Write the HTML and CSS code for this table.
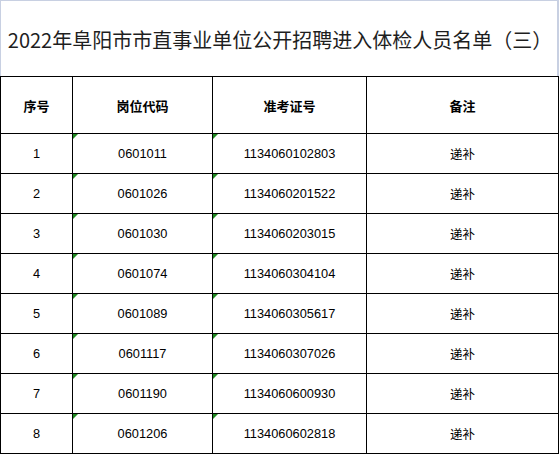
FILE: index.html
```html
<!DOCTYPE html>
<html lang="zh-CN">
<head>
<meta charset="utf-8">
<title>2022年阜阳市市直事业单位公开招聘进入体检人员名单（三）</title>
<link rel="stylesheet" href="styles.css">
</head>
<body>
<div class="sheet">
  <div class="title">2022年阜阳市市直事业单位公开招聘进入体检人员名单（三）</div>
  <table class="list">
    <colgroup>
      <col class="c1"><col class="c2"><col class="c3"><col class="c4">
    </colgroup>
    <thead>
      <tr class="head"><th>序号</th><th>岗位代码</th><th>准考证号</th><th>备注</th></tr>
    </thead>
    <tbody>
      <tr><td>1</td><td class="flag">0601011</td><td class="flag">1134060102803</td><td class="cn">递补</td></tr>
      <tr><td>2</td><td class="flag">0601026</td><td class="flag">1134060201522</td><td class="cn">递补</td></tr>
      <tr><td>3</td><td class="flag">0601030</td><td class="flag">1134060203015</td><td class="cn">递补</td></tr>
      <tr><td>4</td><td class="flag">0601074</td><td class="flag">1134060304104</td><td class="cn">递补</td></tr>
      <tr><td>5</td><td class="flag">0601089</td><td class="flag">1134060305617</td><td class="cn">递补</td></tr>
      <tr><td>6</td><td class="flag">0601117</td><td class="flag">1134060307026</td><td class="cn">递补</td></tr>
      <tr><td>7</td><td class="flag">0601190</td><td class="flag">1134060600930</td><td class="cn">递补</td></tr>
      <tr><td>8</td><td class="flag">0601206</td><td class="flag">1134060602818</td><td class="cn">递补</td></tr>
    </tbody>
  </table>
</div>
</body>
</html>
```
FILE: styles.css
```css
html, body {
  margin: 0;
  padding: 0;
  background: #ffffff;
}
.sheet {
  width: 559px;
}
.title {
  box-sizing: border-box;
  height: 76px;
  border-top: 1px solid #c8d0e2;
  border-left: 1px solid #c8d0e2;
  border-right: 2px solid #c8d0e2;
  display: flex;
  align-items: center;
  justify-content: center;
  padding-left: 2px;
  padding-top: 2px;
  font-family: "Noto Sans CJK SC", "Noto Sans", sans-serif;
  font-size: 20px;
  color: #1e1e1e;
  white-space: nowrap;
}
.list {
  width: 558px;
  border-collapse: collapse;
  table-layout: fixed;
}
.c1 { width: 72px; }
.c2 { width: 140px; }
.c3 { width: 154px; }
.c4 { width: 192px; }
.list th, .list td {
  border: 1px solid #000;
  padding: 0;
  text-align: center;
  vertical-align: middle;
  position: relative;
}
.head th {
  height: 56px;
  font-family: "Noto Sans CJK SC", sans-serif;
  font-weight: bold;
  font-size: 13px;
  color: #000;
}
.list td {
  height: 39px;
  font-family: "Liberation Sans", Arial, sans-serif;
  font-size: 12.8px;
  color: #000;
}
.list td.cn {
  font-family: "Noto Sans CJK SC", sans-serif;
  font-size: 12.5px;
}
.flag::before {
  content: "";
  position: absolute;
  left: 0;
  top: 0;
  width: 0;
  height: 0;
  border-top: 5px solid #1f8a1f;
  border-right: 5px solid transparent;
}
```
